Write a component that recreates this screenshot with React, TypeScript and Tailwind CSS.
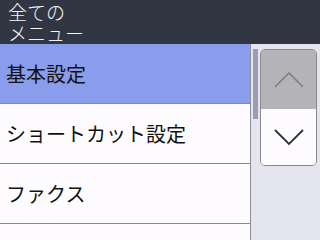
import React from "react";

const items = ["基本設定", "ショートカット設定", "ファクス", "コピー"];

export default function App() {
  return (
    <div
      className="w-[320px] h-[240px] overflow-hidden flex flex-col bg-[#e4e5ee]"
      style={{ fontFamily: '"Noto Sans CJK JP", sans-serif' }}
    >
      <div className="h-[44px] shrink-0 bg-[#323642] text-[#f4f4f8] text-[19px] leading-[21px] pl-[8px] pt-[1px] font-light">
        <div>全ての</div>
        <div>メニュー</div>
      </div>
      <div className="flex flex-1 min-h-0">
        <div className="w-[251px] shrink-0 flex flex-col border-r border-[#8d8e96]">
          {items.map((t, i) => (
            <div
              key={t}
              className={
                "h-[60px] shrink-0 flex items-center pl-[6px] text-[20px] text-[#111] border-b border-[#8a8a8a] " +
                (i === 0 ? "bg-[#8a9cec]" : "bg-[#fdfbfe]")
              }
            >
              {i < 3 ? t : ""}
            </div>
          ))}
        </div>
        <div className="flex-1 flex pt-[5px] pl-[2px]">
          <div className="w-[5px] h-[70px] bg-[#9b9db4]" />
          <div className="ml-[2px] w-[57px] h-[117px] rounded-[5px] border border-[#8a8a8e] overflow-hidden flex flex-col">
            <div className="h-[59px] bg-[#b4b3b6] flex items-center justify-center">
              <svg width="30" height="18" viewBox="0 0 30 18">
                <path d="M1 16 L15 2 L29 16" fill="none" stroke="#808082" strokeWidth="1.6" />
              </svg>
            </div>
            <div className="flex-1 bg-[#fdfbfe] flex items-center justify-center">
              <svg width="30" height="18" viewBox="0 0 30 18">
                <path d="M1 2 L15 16 L29 2" fill="none" stroke="#2f3040" strokeWidth="1.8" />
              </svg>
            </div>
          </div>
        </div>
      </div>
    </div>
  );
}
